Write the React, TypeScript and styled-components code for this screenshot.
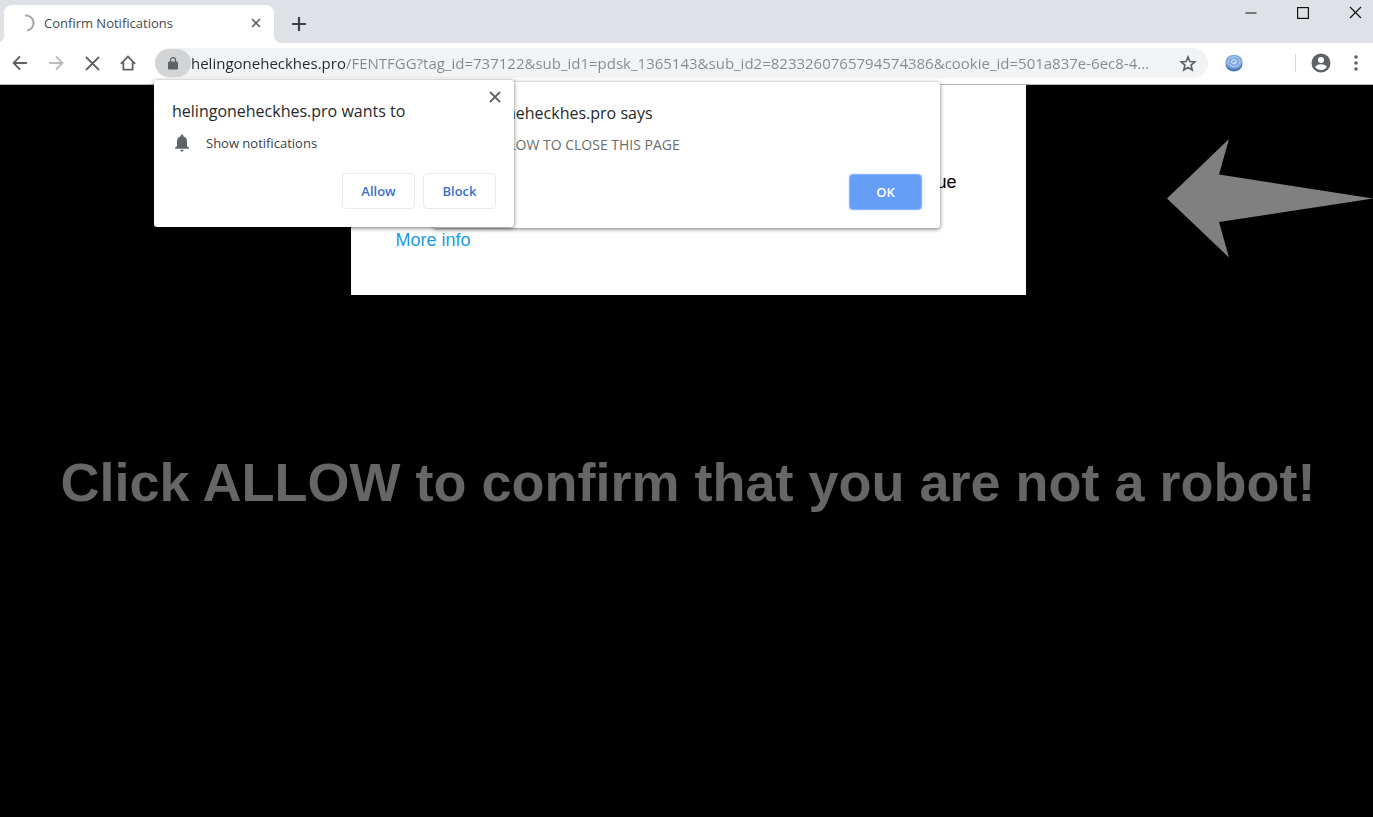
import React from "react";
import styled, { createGlobalStyle } from "styled-components";

const uiFont = `"Open Sans", "Noto Sans", sans-serif`;
const pageFont = `"Liberation Sans", Arial, sans-serif`;

const GlobalStyle = createGlobalStyle`
  * { box-sizing: border-box; }
  body { margin: 0; background: #000; font-family: ${uiFont}; }
  button, input { font-family: inherit; }
  h1, h2, p { margin: 0; font-weight: 400; }
`;

const Window = styled.div`
  position: relative;
  display: flex;
  flex-direction: column;
  min-height: 100vh;
  overflow: hidden;
`;

const TabStrip = styled.header`
  display: flex;
  align-items: flex-end;
  height: 43px;
  padding-left: 4px;
  background: #dee1e6;
`;

const Tab = styled.div`
  position: relative;
  display: flex;
  align-items: center;
  width: 270px;
  height: 38px;
  padding: 0 11px 2px 16px;
  gap: 8px;
  border-radius: 8px 8px 0 0;
  background: #fff;

  &::before,
  &::after {
    content: "";
    position: absolute;
    bottom: 0;
    width: 8px;
    height: 8px;
  }
  &::before {
    left: -8px;
    background: radial-gradient(circle at 0 0, #dee1e6 8px, #fff 8px);
  }
  &::after {
    right: -8px;
    background: radial-gradient(circle at 100% 0, #dee1e6 8px, #fff 8px);
  }
`;

const TabTitle = styled.span`
  flex: 1;
  color: #45494d;
  font-size: 13px;
  line-height: 18px;
  white-space: nowrap;
`;

const IconButton = styled.button<{ $w?: number; $h?: number }>`
  display: flex;
  flex: none;
  align-items: center;
  justify-content: center;
  width: ${({ $w = 36 }) => $w}px;
  height: ${({ $h = 28 }) => $h}px;
  padding: 0;
  border: 0;
  background: none;
  color: #5f6368;
`;

const NewTab = styled(IconButton)`
  margin: 0 0 5px 11px;
  color: #3c4043;
`;

const WindowControls = styled.div`
  display: flex;
  align-self: flex-start;
  margin-left: auto;
  gap: 16px;
  button { color: #111; }
`;

const Toolbar = styled.nav`
  display: flex;
  align-items: center;
  height: 42px;
  padding: 0 0 1px 2px;
  border-bottom: 1px solid #b6b8bb;
  background: #fff;
`;

const AddressBar = styled.div`
  display: flex;
  flex: 1;
  align-items: center;
  height: 30px;
  margin-left: 9px;
  padding-right: 2px;
  border-radius: 15px;
  background: #f1f3f4;
`;

const SiteInfo = styled(IconButton)`
  border-radius: 15px;
  background: #d2d4d5;
`;

const AddressInput = styled.input`
  flex: 1;
  min-width: 0;
  height: 28px;
  padding: 0;
  border: 0;
  outline: 0;
  background: linear-gradient(to right, #26282b 154px, #85898d 154px);
  background-clip: text;
  -webkit-background-clip: text;
  color: transparent;
  font-size: 15px;
  text-overflow: ellipsis;
`;

const Divider = styled.span`
  width: 1px;
  height: 18px;
  margin: 0 7px 0 35px;
  background: #d5d7da;
`;

const Page = styled.main`
  position: relative;
  display: flex;
  flex: 1;
  flex-direction: column;
  align-items: center;
  padding-left: 3px;
  background: #000;
  font-family: ${pageFont};
`;

const Card = styled.section`
  display: flex;
  flex-direction: column;
  width: 675px;
  max-width: 100%;
  height: 210px;
  padding: 86px 69px 0 45px;
  gap: 36px;
  background: #fff;
  color: #000;
  font-size: 18px;
  line-height: 22px;
`;

const CardText = styled.p`
  text-align: right;
`;

const MoreLink = styled.a`
  align-self: flex-start;
  color: #1c9be0;
  text-decoration: none;
`;

const Headline = styled.h1`
  margin-top: 156px;
  color: #666;
  font-size: 54px;
  font-weight: 700;
  line-height: 62px;
  text-align: center;
`;

const ArrowDrawing = styled.svg`
  position: absolute;
  top: 54px;
  right: 0;
`;

const Popup = styled.section`
  position: absolute;
  display: flex;
  flex-direction: column;
  padding: 20px 18px 18px;
  border-radius: 3px;
  background: #fff;
  box-shadow: 0 1px 4px rgba(0, 0, 0, 0.55);
`;

const AlertLayer = styled.div`
  position: absolute;
  top: 82px;
  left: 0;
  right: 0;
  display: flex;
  justify-content: center;
`;

const AlertDialog = styled(Popup)`
  position: static;
  width: 507px;
  height: 146px;
`;

const PermissionPopup = styled(Popup)`
  top: 80px;
  left: 154px;
  width: 360px;
  height: 147px;
`;

const PopupTitle = styled.h2`
  color: #26282b;
  font-size: 16px;
  line-height: 22px;
`;

const AlertMessage = styled.p`
  margin-top: 10px;
  color: #6a6d71;
  font-size: 14px;
  line-height: 22px;
`;

const PermissionRow = styled.div`
  display: flex;
  align-items: center;
  margin-top: 10px;
  gap: 14px;
  color: #3c4043;
  font-size: 13px;
  line-height: 22px;
`;

const Actions = styled.div`
  display: flex;
  justify-content: flex-end;
  margin-top: auto;
  gap: 8px;
`;

const ActionButton = styled.button<{ $primary?: boolean }>`
  width: 73px;
  height: 36px;
  padding: 0;
  border: 1px solid ${({ $primary }) => ($primary ? "#8db8f8" : "#e8eaed")};
  border-radius: 4px;
  background: ${({ $primary }) => ($primary ? "#669df6" : "#fff")};
  box-shadow: ${({ $primary }) => ($primary ? "0 0 2px #a8c9fa" : "none")};
  color: ${({ $primary }) => ($primary ? "#fff" : "#3a70cc")};
  font-size: 13px;
  font-weight: 600;
`;

const ClosePopup = styled(IconButton)`
  position: absolute;
  top: 5px;
  right: 7px;
`;

const Cross = ({ size, stroke = 2 }: { size: number; stroke?: number }) => (
  <svg width={size} height={size} viewBox={`0 0 ${size} ${size}`} stroke="currentColor" strokeWidth={stroke}>
    <path d={`M1 1L${size - 1} ${size - 1}M${size - 1} 1L1 ${size - 1}`} />
  </svg>
);

const BackArrow = () => (
  <svg width="16" height="16" viewBox="0 0 16 16" fill="none" stroke="currentColor" strokeWidth="1.8">
    <path d="M15 8H2M8 1.500L1.500 8l6.500 6.500" />
  </svg>
);

const ForwardArrow = () => (
  <svg width="16" height="16" viewBox="0 0 16 16" fill="none" stroke="#b9bbbe" strokeWidth="1.8">
    <path d="M1 8H14M8 1.500L14.500 8l-6.500 6.500" />
  </svg>
);

const App = () => (
  <>
    <GlobalStyle />
    <Window>
      <TabStrip>
        <Tab>
          <svg width="16" height="18" viewBox="0 0 16 18" fill="none" stroke="#a3a5a8" strokeWidth="2">
            <path d="M5 1.500A7.500 7.500 0 0 1 7 16.500" />
          </svg>
          <TabTitle>Confirm Notifications</TabTitle>
          <IconButton $w={14} aria-label="Close tab">
            <Cross size={10} stroke={1.6} />
          </IconButton>
        </Tab>
        <NewTab $w={28} aria-label="New tab">
          <svg width="14" height="14" viewBox="0 0 14 14" stroke="currentColor" strokeWidth="2.200">
            <path d="M7 0V14M0 7H14" />
          </svg>
        </NewTab>
        <WindowControls>
          <IconButton $h={25} aria-label="Minimize">
            <svg width="12" height="12" viewBox="0 0 12 12" stroke="#555" strokeWidth="1.500">
              <path d="M.5 6h11" />
            </svg>
          </IconButton>
          <IconButton $h={25} aria-label="Maximize">
            <svg width="12" height="12" viewBox="0 0 12 12" fill="none" stroke="currentColor" strokeWidth="1.200">
              <rect x=".6" y=".6" width="10.800" height="10.800" />
            </svg>
          </IconButton>
          <IconButton $h={25} aria-label="Close window">
            <Cross size={13} stroke={1.2} />
          </IconButton>
        </WindowControls>
      </TabStrip>

      <Toolbar>
        <IconButton aria-label="Back"><BackArrow /></IconButton>
        <IconButton aria-label="Forward"><ForwardArrow /></IconButton>
        <IconButton aria-label="Stop loading"><Cross size={15} stroke={1.8} /></IconButton>
        <IconButton aria-label="Home">
          <svg width="16" height="16" viewBox="0 0 16 16" fill="none" stroke="currentColor" strokeWidth="1.800">
            <path d="M.8 8.800L8 1.600l7.200 7.200M3.400 7v7.600h9.200V7" />
          </svg>
        </IconButton>
        <AddressBar>
          <SiteInfo $h={28} aria-label="Site information">
            <svg width="10" height="13" viewBox="0 0 10 13">
              <rect x="0" y="4.500" width="10" height="8" rx="1.200" fill="#5f6368" />
              <path d="M2.500 5V3.200a2.500 2.500 0 0 1 5 0V5" fill="none" stroke="#5f6368" strokeWidth="1.300" />
            </svg>
          </SiteInfo>
          <AddressInput
            aria-label="Address"
            readOnly
            value="helingoneheckhes.pro/FENTFGG?tag_id=737122&sub_id1=pdsk_1365143&sub_id2=8233260765794574386&cookie_id=501a837e-6ec8-4..."
          />
          <IconButton aria-label="Bookmark this page">
            <svg width="18" height="17" viewBox="0 0 18 17" fill="none" stroke="currentColor" strokeWidth="1.700">
              <path d="M9 2l1.900 4.500 4.900.4-3.700 3.200 1.100 4.800L9 12.400l-4.200 2.500 1.100-4.800L2.200 6.900l4.900-.4z" />
            </svg>
          </IconButton>
        </AddressBar>
        <IconButton $w={52} aria-label="Extension">
          <svg width="18" height="18" viewBox="0 0 18 18" fill="none">
            <ellipse cx="9" cy="10" rx="8.500" ry="7.500" fill="#4d78bd" />
            <ellipse cx="9" cy="7.800" rx="8.500" ry="7" fill="#82a8dc" />
            <ellipse cx="9" cy="7.600" rx="6" ry="4.800" stroke="#b5d0f2" />
            <path d="M11.500 8.500c-1.500 2-5 1.300-5-.8S9.600 5 10.800 6.300c1 1.100-.4 2.500-1.600 2.200" stroke="#e4f0ff" />
          </svg>
        </IconButton>
        <Divider />
        <IconButton aria-label="Profile">
          <svg width="20" height="20" viewBox="0 0 20 20">
            <circle cx="10" cy="10" r="9.500" fill="#5f6368" />
            <circle cx="10" cy="7" r="3" fill="#fff" />
            <path d="M4.200 14c1-2.200 3.800-2.800 5.800-2.800s4.800.6 5.800 2.800c-1.300 1.900-3.500 3-5.800 3s-4.500-1.100-5.800-3z" fill="#fff" />
          </svg>
        </IconButton>
        <IconButton $w={34} aria-label="Menu">
          <svg width="4" height="16" viewBox="0 0 4 16" fill="currentColor">
            <circle cx="2" cy="2" r="1.800" />
            <circle cx="2" cy="8" r="1.800" />
            <circle cx="2" cy="14" r="1.800" />
          </svg>
        </IconButton>
      </Toolbar>

      <Page>
        <Card>
          <CardText>Click Allow to continue</CardText>
          <MoreLink href="#info">More info</MoreLink>
        </Card>
        <ArrowDrawing width="206" height="119" viewBox="0 0 206 119" fill="#808080">
          <path d="M0 59.500L62 0 52 35.500 206 59.500 52 83 62 118.500z" />
        </ArrowDrawing>
        <Headline>Click ALLOW to confirm that you are not a robot!</Headline>
      </Page>

      <AlertLayer>
        <AlertDialog role="alertdialog" aria-labelledby="alert-title">
          <PopupTitle id="alert-title">helingoneheckhes.pro says</PopupTitle>
          <AlertMessage>CLICK ALLOW TO CLOSE THIS PAGE</AlertMessage>
          <Actions>
            <ActionButton $primary>OK</ActionButton>
          </Actions>
        </AlertDialog>
      </AlertLayer>

      <PermissionPopup role="dialog" aria-labelledby="permission-title">
        <PopupTitle id="permission-title">helingoneheckhes.pro wants to</PopupTitle>
        <PermissionRow>
          <svg width="20" height="18" viewBox="0 0 20 18" fill="#5f6368">
            <path d="M10 .5c.8 0 1.300.5 1.300 1.200v.5c2.300.6 3.700 2.500 3.700 5V12l2 2v.8H3V14l2-2V7.200c0-2.500 1.400-4.400 3.700-5v-.5C8.700 1 9.200.5 10 .5zM8.300 15.700h3.400c0 1-.7 1.800-1.700 1.800s-1.700-.8-1.700-1.800z" />
          </svg>
          Show notifications
        </PermissionRow>
        <Actions>
          <ActionButton>Allow</ActionButton>
          <ActionButton>Block</ActionButton>
        </Actions>
        <ClosePopup $w={24} $h={24} aria-label="Close">
          <Cross size={12} stroke={1.8} />
        </ClosePopup>
      </PermissionPopup>
    </Window>
  </>
);

export default App;
